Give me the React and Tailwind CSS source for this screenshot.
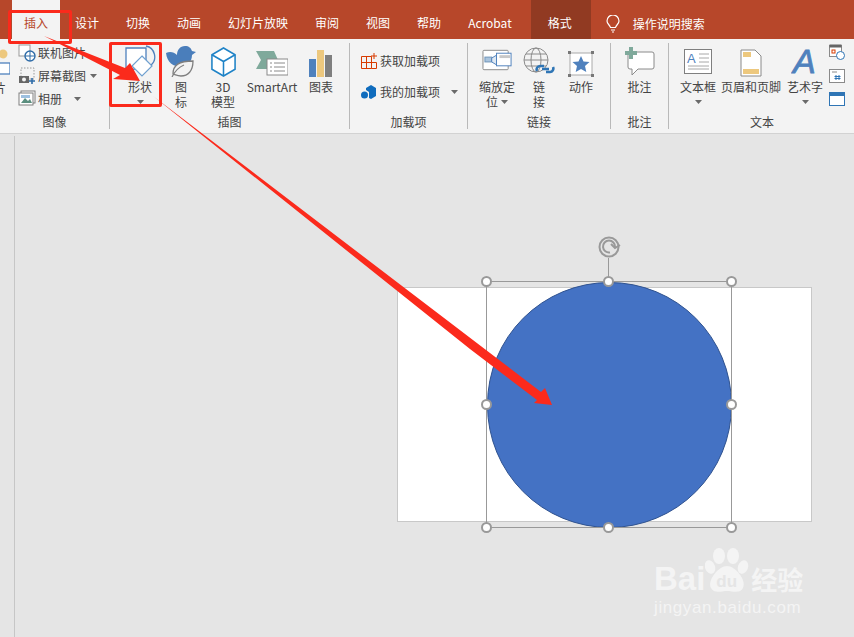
import React from "react";

const tabs = ["设计", "切换", "动画", "幻灯片放映", "审阅", "视图", "帮助", "Acrobat"];

const Caret = ({ className = "" }) => (
  <svg width="7" height="4" viewBox="0 0 7 4" className={className}>
    <path d="M0 0h7L3.5 4z" fill="#6a6a6a" />
  </svg>
);

const ShapesIcon = () => (
  <svg width="32" height="34" viewBox="0 0 32 34" fill="none">
    <path d="M2 27V5h20v20z" fill="#fff" stroke="#4f81bd" strokeWidth="1.3" />
    <path d="M22 3a11 11 0 0 1 5 19" stroke="#4f81bd" strokeWidth="1.3" />
    <path d="M18 13l10 10-10 10-10-10z" fill="#fff" stroke="#6fa0d0" strokeWidth="1.2" />
  </svg>
);

const BirdIcon = () => (
  <svg width="30" height="32" viewBox="0 0 30 32" fill="none">
    <path d="M0 8c4-2 8-1 11 2 0-5 3-9 8-9 4 0 6 2 7 5l4 1-4 3c0 7-5 12-10 12C7 22 1 17 0 8z" fill="#4a7ebb" />
    <path d="M7 29c0-9 6-13 20-13 0 10-5 15-12 15-3 0-5-1-8-2z" fill="#f3f3f3" stroke="#7f7f7f" strokeWidth="1.3" />
    <path d="M6 32c3-6 7-10 12-12" stroke="#7f7f7f" strokeWidth="1.2" />
  </svg>
);

const CubeIcon = () => (
  <svg width="27" height="30" viewBox="0 0 28 31" fill="none" stroke="#1f83c7" strokeWidth="1.6">
    <path d="M14 1l12 7v15l-12 7-12-7V8z" fill="#fff" />
    <path d="M2 8l12 7 12-7M14 15v15" />
  </svg>
);

const SmartArtIcon = () => (
  <svg width="32" height="26" viewBox="0 0 32 26" fill="none">
    <path d="M0 0h18l4 9-4 9H0l5-9z" fill="#7fa99b" />
    <rect x="11" y="8" width="21" height="16" fill="#fff" stroke="#8a8a8a" />
    <path d="M14 12h2M18 12h11M14 16h2M18 16h11M14 20h2M18 20h11" stroke="#8a8a8a" />
  </svg>
);

const ChartIcon = () => (
  <svg width="24" height="27" viewBox="0 0 24 27">
    <rect x="0" y="9" width="7" height="18" fill="#4f81bd" />
    <rect x="8" y="0" width="7" height="27" fill="#edc87e" />
    <rect x="16" y="5" width="7" height="22" fill="#7f7f7f" />
  </svg>
);

const LargeButton = ({ icon, label, width, caret }) => (
  <div className="flex flex-col items-center shrink-0" style={{ width }}>
    <div className="h-[30px] flex items-end justify-center">{icon}</div>
    <div className="text-center leading-[15px] mt-[2px] whitespace-pre-line">{label}</div>
    {caret && <Caret className="mt-[6px]" />}
  </div>
);

const Group = ({ label, width, children, last }) => (
  <div
    className={`shrink-0 h-full flex flex-col ${last ? "" : "border-r border-[#b9b9b9]"}`}
    style={{ width }}
  >
    <div className="flex-1 min-h-0 flex pt-[4px]">{children}</div>
    <div className="h-[14px] text-center leading-[14px] text-[#444]">{label}</div>
  </div>
);

export default function App() {
  return (
    <div
      className="relative w-[854px] h-[637px] overflow-hidden bg-[#e5e5e5] text-[12px] text-[#444]"
      style={{ fontFamily: '"Noto Sans CJK SC", "Liberation Sans", sans-serif' }}
    >
      {/* Title / tab bar */}
      <div className="h-[39px] bg-[#b7472a] flex items-stretch pl-[12px] gap-[3px] text-white">
        <div className="bg-[#f3f3f3] text-[#b7472a] px-3 leading-[46px]">插入</div>
        {tabs.map((t) => (
          <div key={t} className="px-3 leading-[46px]">{t}</div>
        ))}
        <div className="bg-[#913a22] ml-[4px] pl-[17px] pr-[19px] leading-[46px]">格式</div>
        <div className="flex items-center gap-[13px] ml-[12px] pt-[8px]">
          <svg width="14" height="18" viewBox="0 0 14 18" fill="none" stroke="#fff" strokeWidth="1.2">
            <path d="M4.5 12.5C4 10 1 9 1 6a6 6 0 0 1 12 0c0 3-3 4-3.500 6.500z" />
            <path d="M5 15h4M6 17h2" />
          </svg>
          <span>操作说明搜索</span>
        </div>
      </div>

      {/* Ribbon */}
      <div className="h-[95px] bg-[#f3f3f3] border-b border-[#d2d2d2] flex py-[4px]">
        <Group label="图像" width={110}>
          <div className="w-[18px] shrink-0 overflow-hidden">
            <svg width="18" height="33" viewBox="0 0 18 33" className="-ml-[8px]" fill="none">
              <circle cx="11" cy="7" r="4.500" fill="#edc87e" />
              <rect x="2" y="16" width="16" height="11" fill="#fff" stroke="#4f81bd" strokeWidth="1.3" />
            </svg>
            <div className="-ml-[6px] leading-[15px]">片</div>
          </div>
          <div className="flex flex-col gap-[3px] -mt-[4px] leading-[20px]">
            <div className="flex items-center gap-[2px] h-[20px]">
              <svg width="18" height="18" viewBox="0 0 18 18" fill="none">
                <rect x="1" y="1" width="11" height="11" fill="#fff" stroke="#999" />
                <circle cx="12" cy="12" r="5" fill="#fff" stroke="#2f6ca8" strokeWidth="1.4" />
                <path d="M7 12h10M12 7v10" stroke="#2f6ca8" />
              </svg>
              <span>联机图片</span>
            </div>
            <div className="flex items-center gap-[2px] h-[20px]">
              <svg width="18" height="18" viewBox="0 0 18 18" fill="none">
                <rect x="3" y="1" width="13" height="11" stroke="#999" strokeDasharray="1.500 1.500" />
                <rect x="1" y="9" width="10" height="7" fill="#666" />
                <circle cx="6" cy="12.500" r="2" fill="#f3f3f3" />
                <path d="M11 14h6M14 11v6" stroke="#2f6ca8" strokeWidth="1.6" />
              </svg>
              <span>屏幕截图</span>
              <Caret className="ml-[2px]" />
            </div>
            <div className="flex items-center gap-[2px] h-[20px]">
              <svg width="18" height="18" viewBox="0 0 18 18" fill="none">
                <rect x="3" y="1" width="14" height="12" fill="#fff" stroke="#7f7f7f" />
                <rect x="1" y="3" width="14" height="12" fill="#fff" stroke="#7f7f7f" />
                <path d="M3 13l4-5 3 3 2-2 2 4z" fill="#5b8f7f" />
                <rect x="3" y="5" width="9" height="3" fill="#9cc0e0" />
              </svg>
              <span>相册</span>
              <Caret className="ml-[10px]" />
            </div>
          </div>
        </Group>

        <Group label="插图" width={240}>
          <div className="flex pl-[7px]">
            <LargeButton width={46} icon={<ShapesIcon />} label="形状" caret />
            <LargeButton width={36} icon={<BirdIcon />} label={"图\n标"} />
            <LargeButton width={48} icon={<CubeIcon />} label={"3D\n模型"} />
            <LargeButton width={50} icon={<SmartArtIcon />} label="SmartArt" />
            <LargeButton width={48} icon={<ChartIcon />} label="图表" />
          </div>
        </Group>

        <Group label="加载项" width={118}>
          <div className="flex flex-col pl-[11px] pt-[3px] gap-[10px]">
            <div className="flex items-center gap-[3px] h-[21px]">
              <svg width="16" height="16" viewBox="0 0 16 16" fill="none" stroke="#d83b01" strokeWidth="1">
                <path d="M.5 3.500h10v12H.5zM.5 9.500h10M5.500 3.500v12M10.500 9.500h5v6h-5M13 0v6M10 3h6" />
              </svg>
              <span>获取加载项</span>
            </div>
            <div className="flex items-center gap-[3px] h-[21px]">
              <svg width="16" height="16" viewBox="0 0 16 16" fill="#0f6cbd">
                <path d="M5 4l5-3 5 3v8l-5 3-2-1V8L5 6z" />
                <circle cx="3.500" cy="11" r="3.500" />
              </svg>
              <span>我的加载项</span>
              <Caret className="ml-[8px]" />
            </div>
          </div>
        </Group>

        <Group label="链接" width={143}>
          <div className="flex pl-[5px]">
            <div className="flex flex-col items-center shrink-0 w-[48px]">
              <div className="h-[30px] flex items-end justify-center pb-[6px]">
                <svg width="31" height="22" viewBox="0 0 32 22" fill="none">
                  <rect x="1" y="1" width="26" height="20" rx="1" fill="#fff" stroke="#8a8a8a" />
                  <rect x="3" y="8" width="7" height="5" fill="#a9c4de" stroke="#6f94b8" />
                  <path d="M10 9l5-3v10l-5-3z" fill="#dfe9f3" stroke="#4f81bd" />
                  <rect x="15" y="4" width="15" height="13" fill="#fff" stroke="#4f81bd" />
                  <rect x="18" y="6" width="11" height="3" fill="#c8c8c8" />
                </svg>
              </div>
              <div className="text-center leading-[15px] mt-[2px]">缩放定</div>
              <div className="flex items-center gap-[3px] leading-[15px]">
                <span>位</span>
                <Caret />
              </div>
            </div>
            <LargeButton
              width={36}
              icon={
                <svg width="32" height="30" viewBox="0 0 32 30" fill="none">
                  <circle cx="13" cy="13" r="12" stroke="#8a8a8a" />
                  <ellipse cx="13" cy="13" rx="5" ry="12" stroke="#8a8a8a" />
                  <path d="M1 13h24M3 7h20M3 19h20" stroke="#8a8a8a" />
                  <path d="M14 24a3.500 3.500 0 0 1 3-5h4M30 20a3.500 3.500 0 0 1-3 5h-4M19 22h7" stroke="#2f75b5" strokeWidth="2.600" />
                </svg>
              }
              label={"链\n接"}
            />
            <LargeButton
              width={48}
              icon={
                <svg width="26" height="26" viewBox="0 0 26 26" fill="none">
                  <rect x="2" y="2" width="22" height="22" fill="#fff" stroke="#aaa" />
                  <path d="M13 5l2.500 5.500 6 .6-4.500 4 1.300 6L13 18l-5.300 3.100 1.300-6-4.500-4 6-.6z" fill="#4f81bd" />
                  <rect x="0" y="0" width="3" height="3" fill="#777" />
                  <rect x="23" y="0" width="3" height="3" fill="#777" />
                  <rect x="0" y="23" width="3" height="3" fill="#777" />
                  <rect x="23" y="23" width="3" height="3" fill="#777" />
                </svg>
              }
              label="动作"
            />
          </div>
        </Group>

        <Group label="批注" width={58}>
          <LargeButton
            width={57}
            icon={
              <svg width="30" height="30" viewBox="0 0 30 30" fill="none">
                <path d="M5 5h22a2 2 0 0 1 2 2v13a2 2 0 0 1-2 2H13l-6 6v-6H5a2 2 0 0 1-2-2V7a2 2 0 0 1 2-2z" fill="#fff" stroke="#8a8a8a" />
                <path d="M4 0h4v4h4v4H8v4H4V8H0V4h4z" fill="#7fa99b" />
              </svg>
            }
            label="批注"
          />
        </Group>

        <Group label="文本" width={186} last>
          <div className="flex pl-[10px]">
            <LargeButton
              width={38}
              icon={
                <svg width="28" height="25" viewBox="0 0 28 25" fill="none" className="mb-[3px]">
                  <rect x=".5" y=".5" width="27" height="24" fill="#fff" stroke="#7f7f7f" />
                  <text x="3" y="14" fontSize="13" fill="#4f81bd" fontFamily="Liberation Sans, sans-serif">A</text>
                  <path d="M15 5h10M15 9h10M15 13h10M4 17h21M4 20h21" stroke="#a8a8a8" />
                </svg>
              }
              label="文本框"
              caret
            />
            <LargeButton
              width={68}
              icon={
                <svg width="22" height="28" viewBox="0 0 22 28" fill="none">
                  <path d="M1 1h14l6 6v20H1z" fill="#fff" stroke="#8a8a8a" />
                  <rect x="3" y="3" width="8" height="5" fill="#edc87e" />
                  <rect x="3" y="20" width="16" height="5" fill="#edc87e" />
                </svg>
              }
              label="页眉和页脚"
            />
            <LargeButton
              width={40}
              icon={
                <svg width="28" height="30" viewBox="0 0 28 30">
                  <text x="2" y="26" fontSize="34" fontStyle="italic" fill="#4f81bd" stroke="#4f81bd" strokeWidth=".8" fontFamily="Liberation Sans, sans-serif">A</text>
                </svg>
              }
              label="艺术字"
              caret
            />
            <div className="flex flex-col gap-[9px] ml-[4px] -mt-[3px]">
              <svg width="16" height="16" viewBox="0 0 16 16" fill="none">
                <rect x=".5" y="1.500" width="12" height="11" fill="#fff" stroke="#8a8a8a" />
                <rect x=".5" y=".5" width="12" height="3" fill="#666" />
                <rect x="3" y="6" width="3" height="3" stroke="#d83b01" />
                <circle cx="11.500" cy="11.500" r="4" fill="#fff" stroke="#2f75b5" />
              </svg>
              <svg width="16" height="14" viewBox="0 0 16 14" fill="none">
                <rect x=".5" y=".5" width="15" height="13" fill="#fff" stroke="#8a8a8a" />
                <path d="M3 3h5" stroke="#8a8a8a" />
                <path d="M7 6v5M10 6v5M5.500 7.500h6M5.500 9.500h6" stroke="#2f75b5" />
              </svg>
              <svg width="16" height="14" viewBox="0 0 16 14" fill="none">
                <rect x=".5" y=".5" width="15" height="13" fill="#fff" stroke="#2f75b5" />
                <rect x="0" y="0" width="16" height="4" fill="#2f75b5" />
              </svg>
            </div>
          </div>
        </Group>
      </div>

      {/* Thumbnail pane edge */}
      <div className="absolute left-[14px] top-[136px] bottom-0 w-px bg-[#c6c6c6]" />

      {/* Slide */}
      <div className="absolute left-[397px] top-[287px] w-[415px] h-[235px] bg-white border border-[#c8c8c8]" />

      {/* Selected circle */}
      <div className="absolute left-[487px] top-[282px] w-[245px] h-[246px] rounded-full bg-[#4472c4] border border-[#2f528f]" />
      <div className="absolute left-[486px] top-[281px] w-[246px] h-[247px] border border-[#999]" />
      <div className="absolute left-[608px] top-[258px] w-px h-[24px] bg-[#999]" />
      {[
        "left-[481px] top-[276px]",
        "left-[603px] top-[276px]",
        "left-[726px] top-[276px]",
        "left-[481px] top-[399px]",
        "left-[726px] top-[399px]",
        "left-[481px] top-[522px]",
        "left-[603px] top-[522px]",
        "left-[726px] top-[522px]",
      ].map((pos) => (
        <div key={pos} className={`absolute ${pos} w-[11px] h-[11px] rounded-full bg-white border-2 border-[#999]`} />
      ))}
      <svg className="absolute left-[598px] top-[235px]" width="26" height="24" viewBox="0 0 26 24" fill="none" stroke="#999">
        <circle cx="11" cy="12" r="9.500" strokeWidth="2" />
        <path d="M17 12a6 6 0 1 0-5 5.500" strokeWidth="2" />
        <path d="M13 9l4 4 5-3" strokeWidth="2" />
      </svg>

      {/* Annotations */}
      <div className="absolute left-[8px] top-[10px] w-[64px] h-[34px] border-[3px] border-[#fb2a1c] rounded-[2px]" />
      <div className="absolute left-[109px] top-[42px] w-[53px] h-[65px] border-[3px] border-[#fb2a1c] rounded-[2px]" />
      <svg className="absolute inset-0 pointer-events-none" width="854" height="637" viewBox="0 0 854 637">
        <path d="M44 36L125 68 130 63 140 81 113 79 120 75z" fill="#fb2a1c" />
        <path d="M153 96L541 392 545 388 552 405 534 403 537 400 470 349z" fill="#fb2a1c" />
      </svg>

      {/* Watermark */}
      <div className="absolute left-[654px] top-[545px] w-[160px] text-[#f4f4f4]" style={{ fontFamily: '"Liberation Sans", "Noto Sans CJK SC", sans-serif' }}>
        <div className="flex items-end h-[50px]">
          <span className="text-[33px] font-bold leading-[32px]">Bai</span>
          <div className="relative w-[46px] h-[50px] shrink-0">
            <svg width="46" height="50" viewBox="0 0 46 50" fill="#f4f4f4" className="absolute inset-0">
              <ellipse cx="14" cy="11" rx="6" ry="8" />
              <ellipse cx="28" cy="11" rx="6" ry="8" />
              <ellipse cx="5" cy="22" rx="5" ry="7" transform="rotate(-20 5 22)" />
              <ellipse cx="38" cy="22" rx="5" ry="7" transform="rotate(20 38 22)" />
              <path d="M22 21c8 0 20 14 16 22-3 6-10 3-16 3s-13 3-16-3c-4-8 8-22 16-22z" />
            </svg>
            <span className="absolute left-[11px] top-[28px] text-[17px] leading-[17px] font-bold text-[#e5e5e5]">du</span>
          </div>
          <span className="text-[26px] leading-[32px] font-bold" style={{ fontFamily: '"Noto Sans CJK SC", sans-serif' }}>经验</span>
        </div>
        <div className="text-[17px] leading-[18px] mt-[4px] tracking-[0.6px] whitespace-nowrap">jingyan.baidu.com</div>
      </div>
    </div>
  );
}
